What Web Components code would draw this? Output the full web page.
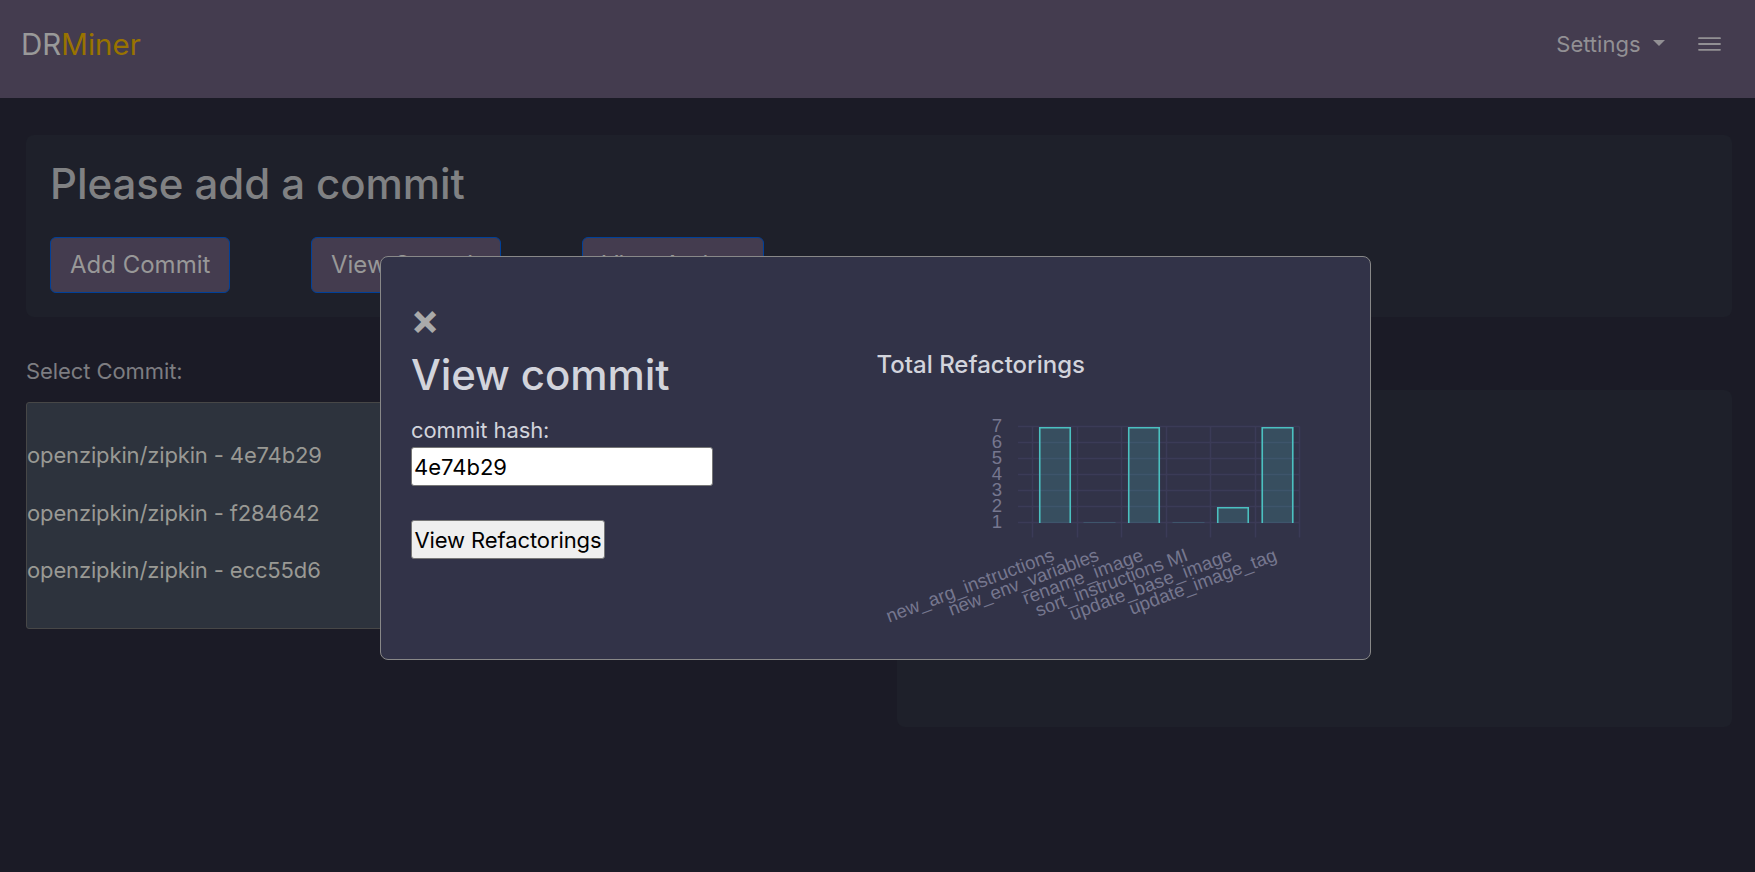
<!DOCTYPE html>
<html lang="en">
<head>
<meta charset="utf-8">
<title>DRMiner</title>
<style>
html,body{margin:0;height:100%;overflow:hidden;background:#1b1b26}
body{font:400 22px/33px Inter,sans-serif}
</style>
</head>
<body>
<dr-app></dr-app>
<script>
function define(name, html, setup) {
  const t = document.createElement('template');
  t.innerHTML = html;
  customElements.define(name, class extends HTMLElement {
    connectedCallback() {
      if (this.shadowRoot) return;
      const r = this.attachShadow({ mode: 'open' });
      r.append(t.content.cloneNode(true));
      if (setup) setup(r);
    }
  });
}

define('dr-header', `
<style>
:host{display:flex;box-sizing:border-box;height:98px;padding:0 34px 9px 21px;background:#443c4f;align-items:center;color:#999}
.brand{font-size:29.5px;line-height:40px;font-weight:380;flex:1;margin-top:-2px}
.brand span{color:#997300}
.settings{display:flex;align-items:center;color:#929094}
.caret{border:6px solid transparent;border-top-color:#929094;border-bottom:0;margin:-4px 33px 0 12.5px}
svg{display:block;margin-top:-2px}
</style>
<div class="brand">DR<span>Miner</span></div>
<div class="settings">Settings<i class="caret"></i></div>
<svg width="23" height="14" viewBox="0 0 23 14" stroke="#929094" stroke-width="1.8" stroke-linecap="round"><path d="M1 1.2h21M1 7h21M1 12.8h21"/></svg>`);

define('dr-panel', `
<style>
:host{display:block;box-sizing:border-box;background:#1e202a;border-radius:8px}
</style><slot></slot>`);

define('dr-button', `
<style>
:host{display:block;box-sizing:border-box;height:56px;padding:0 19px;border:1px solid #004099;border-radius:6px;background:#443c4f;color:#989898;font-size:24px;line-height:54px;font-weight:400;white-space:nowrap}
</style><slot></slot>`);

define('commit-list', `
<style>
:host{display:block;box-sizing:border-box;width:832px;height:227px;padding:24px 0;border:1px solid #474747;border-radius:3px;background:#2d333d;color:#999994;letter-spacing:-.14px}
::slotted(div){line-height:57.5px}
</style><slot></slot>`);

define('refactoring-chart', `
<style>
:host{display:block}
svg{display:block}
text{font:18.6px "Liberation Sans",Arial,sans-serif;fill:#76778f;text-anchor:end}
.grid{stroke:#3b3b57;stroke-width:1.5;fill:none}
.bar{fill:rgba(75,192,192,.2)}
.edge{fill:none;stroke:#4bc0c0;stroke-width:1.6}
</style><svg width="463" height="230" viewBox="877 410 463 230"></svg>`, r => {
  const data = [['new_arg_instructions', 7], ['new_env_variables', 1], ['rename_image', 7], ['sort_instructions MI', 1], ['update_base_image', 2], ['update_image_tag', 7]];
  let s = '<path class="grid" d="';
  for (let i = 0; i < 7; i++) s += `M1018 ${426.5 + 16 * i}H1299.5M${Math.round(1032 + 44.5 * i) + .5} 426.5V537.5`;
  s += '"/>';
  for (let i = 0; i < 7; i++) s += `<text x="1002" y="${431.7 + 16 * i}">${7 - i}</text>`;
  data.forEach(([label, v], i) => {
    const x = 1039 + 44.5 * i;
    const top = v > 1 ? 427 + (7 - v) * 16 : 522;
    s += `<rect class="bar" x="${x}" y="${top}" width="32" height="${523 - top}"/>`;
    if (v > 1) s += `<path class="edge" d="M${x + .75} 523V${top + .75}h30.5V523"/>`;
    s += `<text transform="translate(${x + 16.5} 560) rotate(-20.6)" textLength="${[178, 159, 127, 161, 172, 156][i]}">${label}</text>`;
  });
  r.querySelector('svg').innerHTML = s;
});

define('commit-dialog', `
<style>
:host{display:flex;box-sizing:border-box;width:991px;height:404px;border:1px solid #888;border-radius:8px;background:#323348;color:#d2d4dc;padding:0 30px}
.form{width:465.5px;padding-top:40px}
.close{color:#aaa;font-size:43px;font-weight:700;line-height:44px;height:44px;margin-left:-.5px}
h1{margin:9px 0 0;font-size:42px;line-height:50px;font-weight:500;letter-spacing:-.1px}
label{display:block;margin-top:13.5px;letter-spacing:-.08px}
input{display:block;box-sizing:border-box;width:302px;height:39px;margin:0 0 34px;padding:1px 2px 0;border:1px solid #767676;border-radius:3px;background:#fff;color:#000;font:inherit}
button{display:block;box-sizing:border-box;width:194px;height:39px;padding:2px 2px 0;border:1px solid #767676;border-radius:3px;background:#efefef;color:#000;font:inherit;letter-spacing:-.1px;white-space:nowrap}
.chart{flex:1;padding-top:92px}
h2{margin:0 0 29px;font-size:24px;line-height:32px;font-weight:500}
</style>
<div class="form"><div class="close">×</div><h1>View commit</h1><label>commit hash:</label><input value="4e74b29"><button>View Refactorings</button></div>
<div class="chart"><h2>Total Refactorings</h2><refactoring-chart></refactoring-chart></div>`);

define('dr-app', `
<style>
:host{display:block;position:relative;height:872px}
.top{margin:37px 23px 0 26px;height:182px;padding:24px 24px 0}
h1{margin:0 0 28px;color:#808183;font-size:42px;line-height:50px;font-weight:500;letter-spacing:-.07px}
.actions{display:flex;gap:81px}
.actions :nth-child(1){width:180px}.actions :nth-child(2){width:190px}.actions :nth-child(3){width:182px}
.cols{display:flex;justify-content:space-between;margin:38px 23px 0 26px}
.label{color:#7d7d81;margin-bottom:14px;letter-spacing:-.08px}
.side{width:835px;height:337px;margin-top:35px}
commit-dialog{position:absolute;left:380px;top:256px}
</style>
<dr-header></dr-header>
<dr-panel class="top"><h1>Please add a commit</h1>
<div class="actions"><dr-button>Add Commit</dr-button><dr-button>View Commit</dr-button><dr-button>View Action</dr-button></div></dr-panel>
<div class="cols"><div><div class="label">Select Commit:</div>
<commit-list><div>openzipkin/zipkin - 4e74b29</div><div>openzipkin/zipkin - f284642</div><div>openzipkin/zipkin - ecc55d6</div></commit-list></div>
<dr-panel class="side"></dr-panel></div>
<commit-dialog></commit-dialog>`);
</script>
</body>
</html>
